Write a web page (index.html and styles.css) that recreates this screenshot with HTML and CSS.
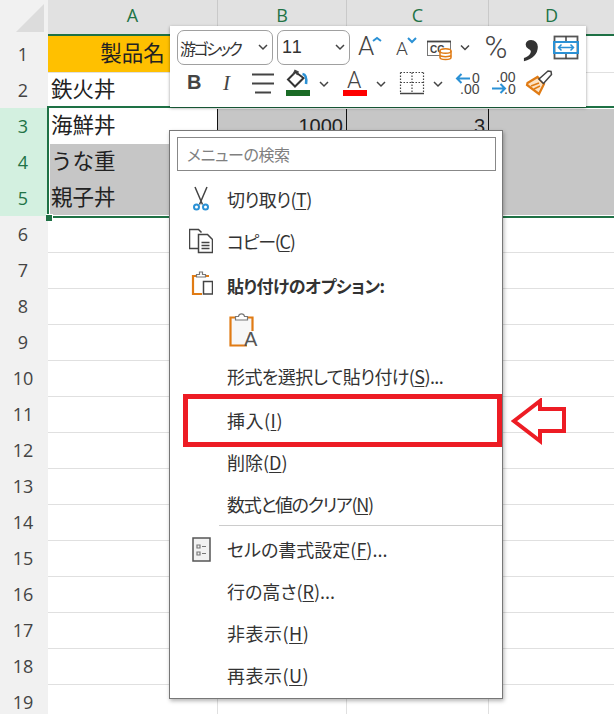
FILE: index.html
```html
<!DOCTYPE html>
<html lang="ja">
<head>
    <meta charset="UTF-8">
    <meta name="viewport" content="width=device-width, initial-scale=1.0">
    <title>セルの右クリックメニュー</title>
    <link rel="stylesheet" href="styles.css">
</head>
<body>
    <svg class="defs" width="0" height="0">
        <symbol id="chev" viewBox="0 0 18 34"><polyline points="5,14 9,18 13,14" class="line-dark"/></symbol>
    </svg>

    <div class="sheet">
        <div class="row head">
            <div class="corner"><svg width="48" height="36"><polygon points="16,32 44,32 44,4" class="corner-mark"/></svg></div>
            <div class="col-name">A</div><div class="col-name">B</div><div class="col-name">C</div><div class="col-name">D</div>
        </div>
        <div class="row"><div class="num">1</div><div class="cell title">製品名</div><div class="cell"></div><div class="cell"></div><div class="cell"></div></div>
        <div class="row to-sel"><div class="num">2</div><div class="cell">鉄火丼</div><div class="cell"></div><div class="cell"></div><div class="cell"></div></div>
        <div class="row sel first"><div class="num on">3</div><div class="cell active">海鮮丼</div><div class="cell grey value">1000</div><div class="cell grey value">3</div><div class="cell grey"></div></div>
        <div class="row sel"><div class="num on">4</div><div class="cell grey dark-line">うな重</div><div class="cell grey"></div><div class="cell grey"></div><div class="cell grey"></div></div>
        <div class="row sel"><div class="num on">5</div><div class="cell grey">親子丼</div><div class="cell grey"></div><div class="cell grey"></div><div class="cell grey"></div></div>
        <div class="row"><div class="num">6</div><div class="cell"></div><div class="cell"></div><div class="cell"></div><div class="cell"></div></div>
        <div class="row"><div class="num">7</div><div class="cell"></div><div class="cell"></div><div class="cell"></div><div class="cell"></div></div>
        <div class="row"><div class="num">8</div><div class="cell"></div><div class="cell"></div><div class="cell"></div><div class="cell"></div></div>
        <div class="row"><div class="num">9</div><div class="cell"></div><div class="cell"></div><div class="cell"></div><div class="cell"></div></div>
        <div class="row"><div class="num">10</div><div class="cell"></div><div class="cell"></div><div class="cell"></div><div class="cell"></div></div>
        <div class="row"><div class="num">11</div><div class="cell"></div><div class="cell"></div><div class="cell"></div><div class="cell"></div></div>
        <div class="row"><div class="num">12</div><div class="cell"></div><div class="cell"></div><div class="cell"></div><div class="cell"></div></div>
        <div class="row"><div class="num">13</div><div class="cell"></div><div class="cell"></div><div class="cell"></div><div class="cell"></div></div>
        <div class="row"><div class="num">14</div><div class="cell"></div><div class="cell"></div><div class="cell"></div><div class="cell"></div></div>
        <div class="row"><div class="num">15</div><div class="cell"></div><div class="cell"></div><div class="cell"></div><div class="cell"></div></div>
        <div class="row"><div class="num">16</div><div class="cell"></div><div class="cell"></div><div class="cell"></div><div class="cell"></div></div>
        <div class="row"><div class="num">17</div><div class="cell"></div><div class="cell"></div><div class="cell"></div><div class="cell"></div></div>
        <div class="row"><div class="num">18</div><div class="cell"></div><div class="cell"></div><div class="cell"></div><div class="cell"></div></div>
        <div class="row"><div class="num">19</div><div class="cell"></div><div class="cell"></div><div class="cell"></div><div class="cell"></div></div>
    </div>

    <div class="sel-frame"><i class="sel-handle"></i></div>

    <!-- mini toolbar -->
    <div class="toolbar">
        <div class="tool-row top">
            <div class="dropdown font-box"><span class="font-text">游ゴシック</span><svg width="18" height="34"><use href="#chev"/></svg></div>
            <div class="dropdown size-box"><span class="size-text">11</span><svg width="18" height="34"><use href="#chev"/></svg></div>
            <svg width="36" height="35"><text x="8" y="25" class="t-a big">A</text><polyline points="23,11 27,8 31,11" class="line-blue"/></svg>
            <svg width="34" height="35"><text x="10" y="25" class="t-a mid">A</text><polyline points="22,8 26,12 30,8" class="line-blue"/></svg>
            <svg width="36" height="35">
                <rect x="7.500" y="11.500" width="23" height="14" class="frame-thin"/>
                <path d="M7 11.500h24" class="line-dark wide"/>
                <text x="10" y="23" class="t-small">CC</text>
                <path d="M20 21.500v6c0 1.500 2.500 2 5.500 2s5.500-.5 5.500-2v-6z" class="fill-white line-orange"/>
                <ellipse cx="25.500" cy="21" rx="5.500" ry="2.300" class="fill-white line-orange"/>
                <path d="M20 25.500c1 1.500 10 1.500 11 0" class="line-orange"/>
            </svg>
            <svg width="18" height="35"><use href="#chev" y="1"/></svg>
            <svg width="44" height="35"><text x="10.500" y="28" class="t-percent">%</text></svg>
            <svg width="28" height="35"><text x="5" y="20" class="t-comma">,</text></svg>
            <svg width="36" height="35">
                <rect x="8.500" y="6.500" width="23" height="22" class="frame"/>
                <path d="M20 6v6M20 23v6" class="line-dark"/>
                <rect x="8" y="12" width="24" height="11" class="frame-blue"/>
                <path d="M12.500 17.500h15M15.500 14.500l-3 3 3 3M24.500 14.500l3 3-3 3" class="line-blue thin"/>
            </svg>
        </div>
        <div class="tool-row">
            <svg width="35" height="34"><text x="10" y="21" class="t-b">B</text></svg>
            <svg width="33" height="34"><text x="11" y="22" class="t-i">I</text></svg>
            <svg width="36" height="34"><path d="M7 6.500h22M7 15.500h22M10 24.500h16" class="line-dark wide"/></svg>
            <svg width="34" height="34">
                <path d="M14.500 4l-7.500 7.500 7 7 8.500-8.500z" class="fill-white line-thick"/>
                <path d="M12 7l2-4.500 3 1.500-1 3" class="line-dark"/>
                <path d="M21.500 6c3 .5 4.500 2.500 3.500 10" class="line-blue wide"/>
                <rect x="5" y="22" width="24" height="6" class="bar-green"/>
            </svg>
            <svg width="18" height="34"><use href="#chev"/></svg>
            <svg width="39" height="34">
                <text x="14" y="20" class="t-a under">A</text>
                <rect x="10" y="22" width="24" height="6" class="bar-red"/>
            </svg>
            <svg width="18" height="34"><use href="#chev"/></svg>
            <svg width="39" height="34">
                <path d="M10.500 4.500h23M10.500 4.500v20M33.500 4.500v20M22 4.500v20M10.500 14.500h23" class="line-dots"/>
                <path d="M10 25.500h24" class="line-dark"/>
            </svg>
            <svg width="18" height="34"><use href="#chev"/></svg>
            <svg width="39" height="34">
                <path d="M10 10.500h13M14.500 6l-4.500 4.500 4.500 4.500" class="line-blue"/>
                <text x="25" y="15" class="t-dec">0</text>
                <text x="13" y="26" class="t-dec">.00</text>
            </svg>
            <svg width="35" height="34">
                <text x="10" y="14" class="t-dec">.00</text>
                <path d="M6 20.500h13M14.500 16l4.500 4.500-4.500 4.500" class="line-blue"/>
                <text x="18" y="26" class="t-dec">.0</text>
            </svg>
            <svg width="39" height="34">
                <path d="M6.500 15l10-6 6.500 7-5 10-12-9z" class="fill-pale line-orange wide"/>
                <path d="M10 18l8-3M13 21l6-3" class="line-orange"/>
                <path d="M18 11l9-8 3 .5.500 3-8 9z" class="fill-white line-dark"/>
            </svg>
        </div>
    </div>

    <!-- context menu -->
    <div class="menu">
        <input class="search" placeholder="メニューの検索">
        <div class="item">
            <svg class="item-icon" width="24" height="26" viewBox="0 0 24 26">
                <path d="M6 1l7.500 17.500M18 1l-7.500 17.500" class="line-dark"/>
                <circle cx="7.500" cy="21" r="2.500" class="line-blue"/>
                <circle cx="16.500" cy="21" r="2.500" class="line-blue"/>
            </svg>
            <span class="tight-s">切り取り(<u>T</u>)</span>
        </div>
        <div class="item">
            <svg class="item-icon" width="24" height="26" viewBox="0 0 24 26">
                <path d="M10 20.500H.500V1.500h9l3 3" class="line-dark"/>
                <path d="M9.500 6.500h9l5 5v13h-14z" class="fill-white line-dark"/>
                <path d="M12.500 14.500h8M12.500 17.500h8M12.500 20.500h8" class="line-dark"/>
            </svg>
            <span class="tight-l">コピー(<u>C</u>)</span>
        </div>
        <div class="item paste-head">
            <svg class="item-icon" width="24" height="26" viewBox="0 0 24 26">
                <path d="M13 24H4V6h16" class="line-orange wide"/>
                <path d="M7.500 7V4.500h3V2h3v2.500h3V7z" class="fill-white line-grey"/>
                <rect x="14.500" y="11.500" width="9" height="12.500" class="fill-white line-dark"/>
            </svg>
            <strong>貼り付けのオプション:</strong>
        </div>
        <div class="item paste-opt">
            <svg class="paste-icon" width="32" height="40" viewBox="0 0 32 40">
                <path d="M1 7h23v19h-7v9H1z" class="fill-pale-grey"/>
                <path d="M18 34.500H1.500V6.500h5M17.500 6.500h6V20" class="line-orange wide"/>
                <path d="M6.500 9V5.500h3C10 2 15 2 15.500 5.500h3V9z" class="fill-white line-grey"/>
                <text x="15" y="35" class="t-paste">A</text>
            </svg>
        </div>
        <div class="item tall"><span class="tight-s">形式を選択して貼り付け(<u>S</u>)...</span></div>
        <div class="item"><span class="loose">挿入(<u>I</u>)</span></div>
        <div class="item"><span>削除(<u>D</u>)</span></div>
        <div class="item"><span class="tight-l">数式と値のクリア(<u>N</u>)</span></div>
        <div class="divider"></div>
        <div class="item">
            <svg class="item-icon" width="24" height="26" viewBox="0 0 24 26">
                <rect x="4" y="2" width="17" height="23" class="frame-cell"/>
                <path d="M8 9h3v3H8zM8 16h3v3H8z" class="line-grey"/>
                <path d="M13 10.500h4M13 17.500h4" class="line-grey"/>
            </svg>
            <span>セルの書式設定(<u>F</u>)...</span>
        </div>
        <div class="item"><span>行の高さ(<u>R</u>)...</span></div>
        <div class="item"><span class="loose">非表示(<u>H</u>)</span></div>
        <div class="item"><span class="loose">再表示(<u>U</u>)</span></div>
    </div>

    <!-- red annotations -->
    <div class="mark-box"></div>
    <svg class="mark-arrow" width="56" height="48" viewBox="0 0 56 48">
        <polygon points="3,23 29,3 29,11 53,11 53,33 29,33 29,43" class="arrow-line"/>
    </svg>
</body>
</html>
```

FILE: styles.css
```css
html, body {
    margin: 0;
    padding: 0;
    width: 614px;
    height: 714px;
    overflow: hidden;
    background-color: #fff;
    font-family: "Noto Sans CJK JP", sans-serif;
    color: #333;
}
.defs {
    position: absolute;
}

/* Sheet */
.sheet {
    width: 615px;
}
.row {
    display: grid;
    grid-template-columns: 48px 170px 129px 142px 126px;
    height: 36px;
}
.head {
    background-color: #e1e1e1;
}
.corner {
    background-color: #f1f1f1;
    border-bottom: 1px solid #d4d4d4;
    box-sizing: border-box;
}
.corner-mark {
    fill: #dcdcdc;
}
.col-name {
    box-sizing: border-box;
    height: 36px;
    padding-bottom: 4px;
    border-right: 1px solid #c9c9c9;
    border-bottom: 2px solid #1e7145;
    color: #217346;
    font: 18px/30px "Open Sans", sans-serif;
    text-align: center;
}
.num {
    box-sizing: border-box;
    background-color: #f1f1f1;
    border-bottom: 1px solid #d6d6d6;
    color: #444;
    font: 18px/36px "Open Sans", sans-serif;
    text-align: center;
    padding-right: 2px;
}
.num.on {
    background-color: #d3f0e0;
    color: #217346;
    border-bottom-color: #b6d6c4;
}
.cell {
    box-sizing: border-box;
    border-right: 1px solid #e0e0e0;
    border-bottom: 1px solid #e0e0e0;
    padding: 0 3px;
    color: #222;
    font-size: 21.500px;
    line-height: 32px;
    white-space: nowrap;
}
.title {
    background-color: #ffc000;
    text-align: center;
}
.grey {
    background-color: #c6c6c6;
    border-right-color: #c6c6c6;
    border-bottom-color: #a9a9a9;
}
.first .grey {
    border-right-color: #111;
}
.first .active {
    background-color: #fff;
    border-right-color: #111;
    border-bottom-color: #111;
}
.dark-line {
    border-bottom-color: #111;
}
.value {
    text-align: right;
    padding-right: 3px;
    font-family: "Liberation Sans", sans-serif;
    font-size: 20px;
    line-height: 36px;
}
.sel-frame {
    position: absolute;
    left: 47px;
    top: 106px;
    width: 580px;
    height: 108px;
    border: 2px solid #1e7145;
    box-shadow: inset 0 0 0 1px #fff;
}
.sel-handle {
    position: absolute;
    left: -3px;
    bottom: -5px;
    width: 6px;
    height: 6px;
    background-color: #1e7145;
    border-top: 1px solid #fff;
    border-right: 1px solid #fff;
}

/* Toolbar */
.toolbar {
    position: absolute;
    left: 170px;
    top: 26px;
    width: 409px;
    height: 77px;
    padding: 4px 0 0 7px;
    background-color: #fff;
    box-shadow: 0 1px 3px rgba(0, 0, 0, 0.4);
}
.tool-row {
    display: flex;
    height: 34px;
    margin-top: 3px;
}
.tool-row.top {
    height: 35px;
    margin-top: 0;
}
.tool-row svg {
    flex: none;
    display: block;
    overflow: visible;
}
.dropdown {
    box-sizing: border-box;
    height: 35px;
    display: flex;
    align-items: center;
    justify-content: space-between;
    border: 1px solid #a0a0a0;
    border-radius: 7px;
    font-size: 18px;
    font-feature-settings: "palt";
    color: #333;
    padding-left: 2px;
    white-space: nowrap;
}
.font-box {
    width: 96px;
    margin-right: 4px;
}
.font-text {
    font-size: 16px;
    letter-spacing: -2.500px;
}
.size-box {
    width: 73px;
}
.size-text {
    padding-left: 2px;
    font-family: "Liberation Sans", sans-serif;
    letter-spacing: 1px;
}

/* SVG drawing bits */
svg text {
    fill: #444;
    font-family: "Liberation Sans", sans-serif;
}
.t-a {
    font-family: Roboto, sans-serif;
    font-weight: 300;
}
.t-a.big { font-size: 26px; }
.t-a.mid { font-size: 19px; }
.t-a.under { font-size: 23px; }
.t-small { font-size: 10px; font-weight: bold; }
.t-percent { font-family: Roboto, sans-serif; font-size: 31px; font-weight: 300; }
.t-comma { font-family: "Liberation Serif", serif; font-size: 70px; font-weight: bold; fill: #333; }
.t-b { font-size: 20px; font-weight: bold; }
.t-i { font-family: "Liberation Serif", serif; font-size: 21px; font-style: italic; }
.t-dec { font-size: 14px; }
.t-paste { font-size: 20px; fill: #555; }
.line-dark, .line-blue, .line-orange, .line-grey, .line-dots, .line-thick {
    fill: none;
    stroke-width: 1.500;
}
.line-dark { stroke: #444; }
.line-thick { stroke: #333; stroke-width: 2; }
.line-grey { stroke: #777; stroke-width: 1.200; }
.line-blue { stroke: #2b91d5; stroke-width: 2; }
.line-blue.thin { stroke-width: 1.500; }
.line-blue.wide { stroke-width: 2.600; }
.line-orange { stroke: #e07b14; }
.line-dark.wide { stroke-width: 1.800; }
.line-orange.wide { stroke-width: 2.200; }
.line-dots { stroke: #444; stroke-width: 1.200; stroke-dasharray: 1.500 1.500; }
.fill-white { fill: #fff; }
.fill-pale { fill: #fbe3c6; }
.fill-pale-grey { fill: #f7f7f7; }
.frame { fill: #fff; stroke: #555; stroke-width: 1.800; }
.frame-thin { fill: #fff; stroke: #777; stroke-width: 1; }
.frame-blue { fill: none; stroke: #2b91d5; stroke-width: 2; }
.frame-cell { fill: #f2f2f2; stroke: #555; stroke-width: 1.500; }
.bar-green { fill: #1a6b26; }
.bar-red { fill: #fe0000; }

/* Context menu */
.menu {
    position: absolute;
    left: 169px;
    top: 130px;
    box-sizing: border-box;
    width: 334px;
    height: 569px;
    padding: 6px 0 0;
    background-color: #fff;
    border: 1px solid #777;
    box-shadow: 1px 2px 4px rgba(0, 0, 0, 0.3);
    font-size: 18px;
    color: #333;
    font-feature-settings: "palt";
}
.search {
    display: block;
    box-sizing: border-box;
    width: 319px;
    height: 34px;
    margin: 0 0 7px 7px;
    padding: 0 9px;
    border: 1px solid #888;
    outline: none;
    font: inherit;
    font-size: 16px;
    letter-spacing: -0.400px;
    font-feature-settings: "palt";
}
.search::placeholder {
    color: #808080;
    opacity: 1;
}
.item {
    display: flex;
    align-items: center;
    height: 42px;
    padding-left: 57px;
    position: relative;
    white-space: nowrap;
}
.item u {
    text-underline-offset: 2px;
}
.item-icon {
    position: absolute;
    left: 19px;
    top: 8px;
}
.tight-s { letter-spacing: -0.600px; }
.tight-l { letter-spacing: -1.300px; }
.loose { letter-spacing: 0.500px; }
.paste-head {
    height: 46px;
}
.paste-head strong {
    font-size: 17px;
    letter-spacing: -0.500px;
}
.paste-opt {
    height: 44px;
}
.paste-icon {
    display: block;
    margin-left: 2px;
    margin-top: 2px;
}
.tall {
    height: 47px;
}
.divider {
    height: 1px;
    margin: 0 0 2px 49px;
    background-color: #ccc;
}

/* Annotations */
.mark-box {
    position: absolute;
    left: 183px;
    top: 394px;
    box-sizing: border-box;
    width: 319px;
    height: 53px;
    border: 5px solid #ed1c24;
}
.mark-arrow {
    position: absolute;
    left: 511px;
    top: 398px;
}
.arrow-line {
    fill: #fff;
    stroke: #ed1c24;
    stroke-width: 4;
}
```
